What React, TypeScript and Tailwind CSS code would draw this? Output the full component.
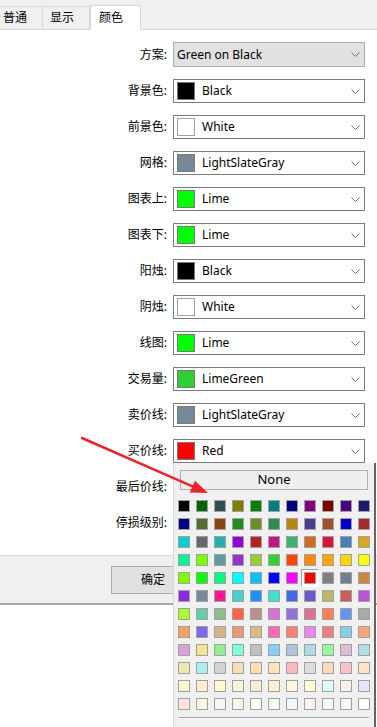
import React from 'react';

const FONT = { fontFamily: '"Noto Sans", "Noto Sans CJK SC", sans-serif' } as const;

interface Row {
  label: string;
  name: string;
  color?: string;
}

const rows: Row[] = [
  { label: '背景色:', name: 'Black', color: '#000000' },
  { label: '前景色:', name: 'White', color: '#ffffff' },
  { label: '网格:', name: 'LightSlateGray', color: '#778899' },
  { label: '图表上:', name: 'Lime', color: '#00ff00' },
  { label: '图表下:', name: 'Lime', color: '#00ff00' },
  { label: '阳烛:', name: 'Black', color: '#000000' },
  { label: '阴烛:', name: 'White', color: '#ffffff' },
  { label: '线图:', name: 'Lime', color: '#00ff00' },
  { label: '交易量:', name: 'LimeGreen', color: '#32cd32' },
  { label: '卖价线:', name: 'LightSlateGray', color: '#778899' },
  { label: '买价线:', name: 'Red', color: '#ff0000' },
  { label: '最后价线:', name: 'Yellow', color: '#ffff00' },
  { label: '停损级别:', name: 'Red', color: '#ff0000' },
];

// known colours, in the order the picker lays them out
const palette = [
  '#000000', '#006400', '#2f4f4f', '#808000', '#008000', '#008080', '#000080', '#800080', '#800000', '#4b0082', '#191970',
  '#00008b', '#556b2f', '#8b4513', '#228b22', '#6b8e23', '#2e8b57', '#b8860b', '#483d8b', '#a0522d', '#0000cd', '#a52a2a',
  '#00ced1', '#696969', '#20b2aa', '#9400d3', '#b22222', '#c71585', '#3cb371', '#d2691e', '#dc143c', '#4682b4', '#daa520',
  '#00fa9a', '#7cfc00', '#5f9ea0', '#9932cc', '#9acd32', '#32cd32', '#ff4500', '#ff8c00', '#ffa500', '#ffd700', '#ffff00',
  '#7fff00', '#00ff00', '#00ff7f', '#00ffff', '#00bfff', '#0000ff', '#ff00ff', '#ff0000', '#808080', '#708090', '#cd853f',
  '#8a2be2', '#778899', '#ff1493', '#48d1cc', '#1e90ff', '#40e0d0', '#4169e1', '#6a5acd', '#bdb76b', '#cd5c5c', '#ba55d3',
  '#adff2f', '#66cdaa', '#8fbc8f', '#ff6347', '#bc8f8f', '#da70d6', '#9370db', '#db7093', '#ff7f50', '#6495ed', '#a9a9a9',
  '#f4a460', '#7b68ee', '#d2b48c', '#e9967a', '#deb887', '#ff69b4', '#fa8072', '#ee82ee', '#f08080', '#87ceeb', '#ffa07a',
  '#dda0dd', '#f0e68c', '#90ee90', '#7fffd4', '#c0c0c0', '#87cefa', '#b0c4de', '#add8e6', '#98fb98', '#d8bfd8', '#b0e0e6',
  '#eee8aa', '#afeeee', '#d3d3d3', '#f5deb3', '#ffdead', '#ffe4b5', '#ffb6c1', '#dcdcdc', '#ffdab9', '#ffc0cb', '#ffe4c4',
  '#fafad2', '#ffebcd', '#fffacd', '#f5f5dc', '#faebd7', '#ffefd5', '#fff8dc', '#ffffe0', '#e0ffff', '#faf0e6', '#e6e6fa',
  '#ffe4e1', '#fdf5e6', '#f5f5f5', '#fff5ee', '#fffff0', '#f0fff0', '#f0f8ff', '#fff0f5', '#f5fffa', '#fffafa', '#ffffff',
];

const SELECTED = 51; // Red

function Chevron() {
  return (
    <svg width="9" height="5" viewBox="0 0 9 5" className="ml-auto mr-[4px] shrink-0">
      <path d="M0.5 0.5 L4.5 4.5 L8.5 0.5" fill="none" stroke="#707070" strokeWidth="1" />
    </svg>
  );
}

function ColorCombo({ name, color }: { name: string; color?: string }) {
  const light = color === '#ffffff';
  return (
    <div className="flex h-[24px] w-[192px] items-center border border-[#7a7a7a] bg-white pl-[3px]">
      <span
        className={`h-[18px] w-[18px] shrink-0 border ${light ? 'border-[#a0a0a0]' : 'border-[#7a7a7a]'}`}
        style={{ backgroundColor: color }}
      />
      <span className="ml-[7px] text-[12px] text-black">{name}</span>
      <Chevron />
    </div>
  );
}

function Tabs() {
  return (
    <div className="flex h-[30px] items-end border-b border-[#d9d9d9] bg-[#f0f0f0] text-[12px] text-black">
      <div className="flex h-[23px] w-[43px] items-center border-r border-t border-[#d9d9d9] pl-[3px]">普通</div>
      <div className="flex h-[23px] w-[47px] items-center border-r border-t border-[#d9d9d9] pl-[7px]">显示</div>
      <div className="-mb-px flex h-[25px] w-[51px] items-start border-x border-t border-[#d9d9d9] bg-white pl-[8px] pt-[3px]">
        颜色
      </div>
    </div>
  );
}

function Picker() {
  return (
    <div className="absolute left-[173px] top-[463px] h-[264px] w-[203px] border-l border-[#d9d9d9] bg-[#f0f0f0] pl-[4px] pr-[4px] pt-[7px] shadow-[inset_-2px_0_0_#646464]">
      <div className="mx-[2px] flex h-[20px] w-[188px] items-center justify-center border border-[#adadad] bg-[#efefef] text-[13px] text-black">
        None
      </div>
      <div className="mt-[10px] grid grid-cols-[repeat(11,12px)] gap-[6px]">
        {palette.map((c, i) => (
          <div key={i} className="relative h-[12px] w-[12px]">
            {i === SELECTED && (
              <span className="absolute -inset-[3px] border border-b-white border-l-[#a0a0a0] border-r-white border-t-[#a0a0a0] bg-white" />
            )}
            <span className="absolute inset-0 border border-[#a0a0a0]" style={{ backgroundColor: c }} />
          </div>
        ))}
      </div>
      <div className="ml-[1px] mt-[7px] h-[2px] w-[190px] border-t border-[#a0a0a0] border-b-white border-b" />
    </div>
  );
}

export default function App() {
  return (
    <div className="relative h-[727px] w-[377px] overflow-hidden bg-white" style={FONT}>
      <Tabs />

      <div className="flex flex-col gap-[12px] pt-[12px]">
        <div className="flex items-center">
          <span className="w-[167px] text-right text-[12px] text-black">方案:</span>
          <div className="ml-[6px] flex h-[25px] w-[192px] items-center border border-[#adadad] bg-[#e1e1e1] pl-[3px] text-[12px] text-black">
            Green on Black
            <Chevron />
          </div>
        </div>
        {rows.map((r) => (
          <div key={r.label} className="flex items-center">
            <span className="w-[167px] text-right text-[12px] text-black">{r.label}</span>
            <div className="ml-[6px]">
              <ColorCombo name={r.name} color={r.color} />
            </div>
          </div>
        ))}
      </div>

      <div className="mt-[20px] flex h-[50px] items-start border-b-2 border-t border-b-[#a9a9a9] border-t-[#d9d9d9] bg-[#f0f0f0] pl-[111px] pt-[10px]">
        <button
          type="button"
          className="flex h-[28px] w-[84px] items-center justify-center border border-[#adadad] bg-[#e1e1e1] text-[12px] text-black"
        >
          确定
        </button>
        <button
          type="button"
          className="ml-[6px] flex h-[28px] w-[84px] items-center justify-center border border-[#adadad] bg-[#e1e1e1] text-[12px] text-black"
        >
          取消
        </button>
      </div>

      <Picker />

      {/* red pointer arrow */}
      <svg className="pointer-events-none absolute left-0 top-0" width="377" height="727">
        <line x1="82" y1="438" x2="193" y2="486.6" stroke="#e8262b" strokeWidth="2.5" strokeLinecap="round" />
        <polygon points="208,493 189.6,492.6 195,480.8" fill="#e8262b" />
      </svg>
    </div>
  );
}
